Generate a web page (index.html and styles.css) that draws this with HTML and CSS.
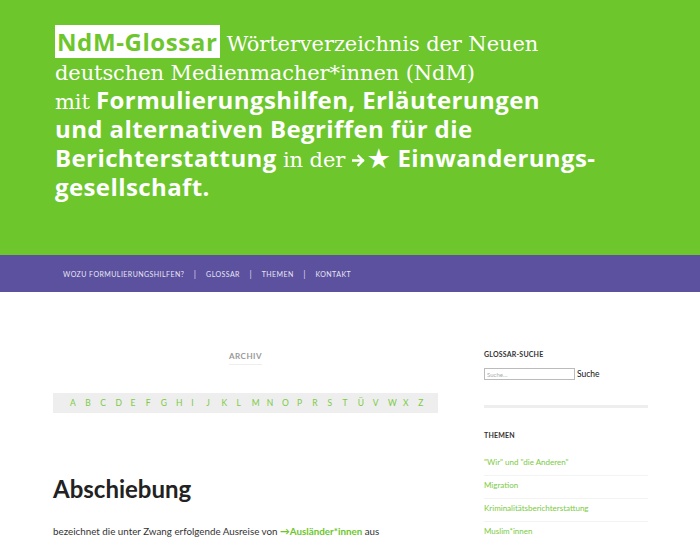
FILE: index.html
```html
<!DOCTYPE html>
<html lang="de">
<head>
<meta charset="utf-8">
<title>NdM-Glossar</title>
<link rel="stylesheet" href="styles.css">
</head>
<body>
<header class="site-header">
  <p class="tagline"><span class="brand">NdM-Glossar</span> <span class="slab">Wörterverzeichnis der Neuen</span><br><span class="slab">deutschen Medienmacher*innen (NdM)</span><br><span class="slab">mit</span> <b>Formulierungshilfen, Erläuterungen</b><br><b>und alternativen Begriffen für die</b><br><b>Berichterstattung</b> <span class="slab">in der</span> <b><svg class="arrow" width="13" height="13" viewBox="0 0 13 13"><path d="M1 6.5 H11 M6.5 2 L11 6.5 L6.5 11" fill="none" stroke="#fff" stroke-width="2.3" stroke-linecap="square"/></svg>★ Einwanderungs-</b><br><b>gesellschaft.</b></p>
</header>
<nav class="site-nav">
  <a href="#">Wozu Formulierungshilfen?</a><span class="sep">|</span><a href="#">Glossar</a><span class="sep">|</span><a href="#">Themen</a><span class="sep">|</span><a href="#">Kontakt</a>
</nav>
<div class="page">
  <main class="main">
    <div class="archiv"><span>Archiv</span></div>
    <div class="alphabet">
      <a>A</a><a>B</a><a>C</a><a>D</a><a>E</a><a>F</a><a>G</a><a>H</a><a>I</a><a>J</a><a>K</a><a>L</a><a>M</a><a>N</a><a>O</a><a>P</a><a>R</a><a>S</a><a>T</a><a>Ü</a><a>V</a><a>W</a><a>X</a><a>Z</a>
    </div>
    <h1 class="entry-title">Abschiebung</h1>
    <p class="entry-text">bezeichnet die unter Zwang erfolgende Ausreise von <a class="ref">→Ausländer*innen</a> aus</p>
  </main>
  <aside class="sidebar">
    <h3 class="widget-title">Glossar-Suche</h3>
    <form class="search"><input type="text" placeholder="Suche…"><span class="search-btn">Suche</span></form>
    <hr class="widget-sep">
    <h3 class="widget-title themen">Themen</h3>
    <ul class="topics">
      <li><a>"Wir" und "die Anderen"</a></li>
      <li><a>Migration</a></li>
      <li><a>Kriminalitätsberichterstattung</a></li>
      <li><a>Muslim*innen</a></li>
    </ul>
  </aside>
</div>
</body>
</html>
```
FILE: styles.css
```css
html, body { margin: 0; padding: 0; background: #fff; }
body { font-family: Lato, "Open Sans", sans-serif; color: #333; }

.site-header {
  background: #6cc62c;
  height: 255px;
  box-sizing: border-box;
  padding: 27px 0 0 55px;
}
.tagline {
  margin: 0;
  color: #fff;
  font-size: 24px;
  line-height: 29px;
  font-family: "Open Sans", sans-serif;
}
.tagline b, .tagline span { line-height: 20px; }
.tagline b { font-weight: 700; letter-spacing: 0.4px; }
.slab { font-family: "DejaVu Serif", serif; font-weight: 300; font-size: 21px; letter-spacing: -0.1px; }
.brand {
  background: #fff;
  color: #6cc62c;
  font-weight: 700;
  letter-spacing: 0.6px;
  padding: 0 3px 0 2px;
}
.arrow { vertical-align: 0; margin: 0 3px 0 1px; }

.site-nav {
  background: #5b519f;
  height: 37px;
  display: flex;
  align-items: center;
  padding-left: 63px;
  font-size: 7px;
  letter-spacing: 0.45px;
  text-transform: uppercase;
}
.site-nav a { color: #e8e6f3; text-decoration: none; }
.site-nav .sep { color: #d8d4ea; margin: 0 9.5px; font-size: 9px; }

.page {
  display: flex;
  padding-left: 53px;
  padding-top: 51px;
}
.main { width: 385px; }
.sidebar { width: 164px; margin-left: 46px; margin-top: 7px; }

.archiv { text-align: center; }
.archiv span {
  display: inline-block;
  font-size: 8px;
  font-weight: 700;
  color: #999;
  letter-spacing: 0.5px;
  text-transform: uppercase;
  padding-bottom: 3px;
  border-bottom: 1px solid #eee;
}
.alphabet {
  margin-top: 28px;
  background: #eee;
  height: 20px;
  display: flex;
  align-items: center;
  padding-left: 17px;
}
.alphabet a {
  color: #7acb43;
  font-size: 8.5px;
  width: 15.15px;
  flex: none;
}
.entry-title {
  margin: 61px 0 0 0;
  font-size: 24px;
  font-weight: 700;
  color: #222;
  line-height: 30px;
}
.entry-text {
  margin: 21px 0 0 0;
  font-size: 9.8px;
  color: #333;
}
.ref { color: #6cc62c; font-weight: 700; }

.widget-title {
  margin: 0;
  font-size: 7px;
  font-weight: 700;
  text-transform: uppercase;
  color: #333;
  letter-spacing: 0.2px;
}
.search { margin-top: 10px; display: flex; align-items: center; }
.search input {
  width: 91px; height: 12px; box-sizing: border-box;
  border: 1px solid #bbb; font-size: 6px; padding: 0 2px;
  font-family: Lato, sans-serif;
}
.search input::placeholder { color: #aaa; }
.search-btn { font-size: 8.5px; color: #111; margin-left: 2px; }
.widget-sep { border: 0; height: 3px; background: #eee; margin: 25px 0 0 0; }
.themen { margin-top: 23px; }
.topics { list-style: none; margin: 14px 0 0 0; padding: 0; }
.topics li {
  font-size: 8px;
  height: 23px;
  line-height: 18px;
  border-bottom: 1px solid #f3f3f3;
  box-sizing: border-box;
}
.topics a { color: #7acb43; }
```
